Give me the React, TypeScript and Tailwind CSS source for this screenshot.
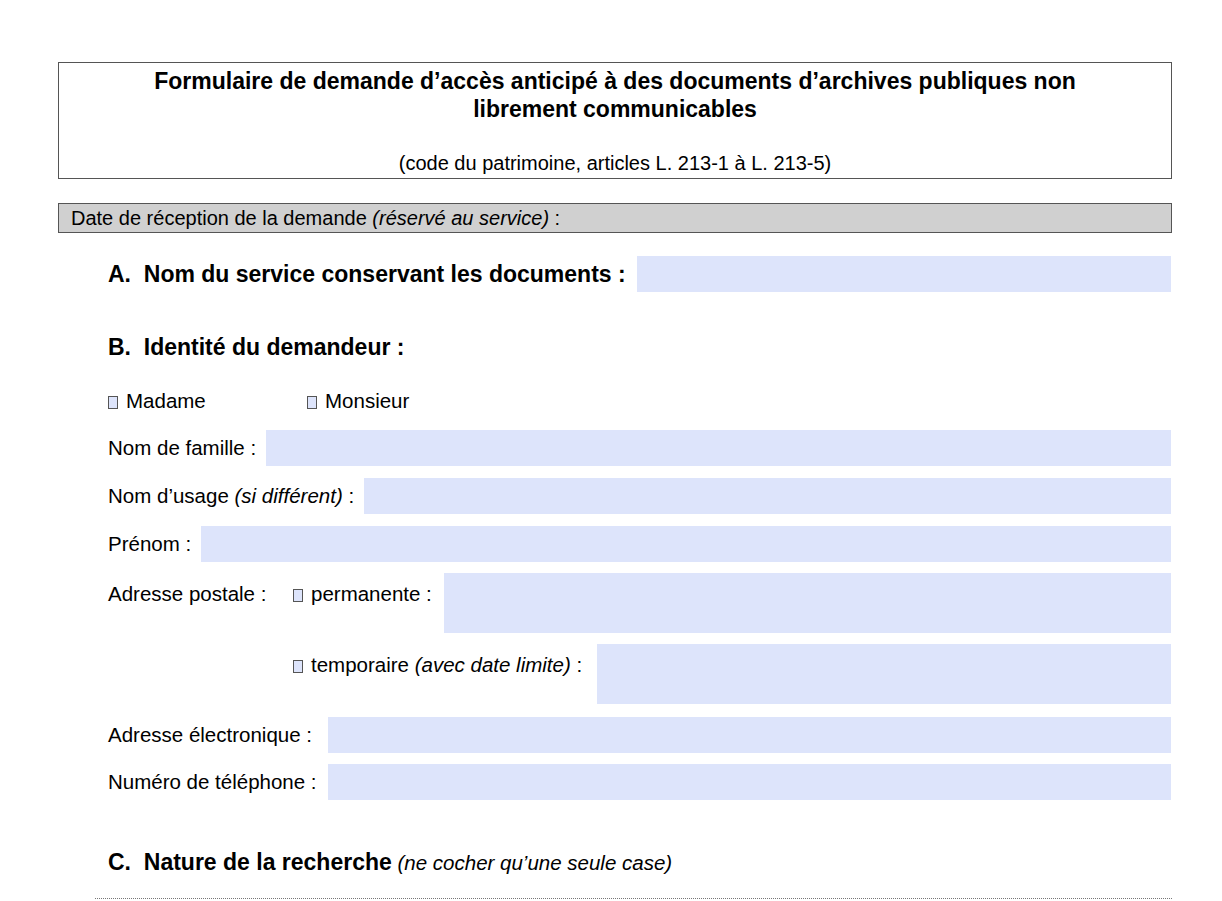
export default function App() {
  const F = "bg-[#dde4fb]";
  const Box = () => (
    <span className="inline-block w-[10px] h-[13px] border border-[#555] bg-[#dde4fb] mr-[8px] align-[-1px]" />
  );
  const Row = ({ label, mt = 12 }: { label: React.ReactNode; mt?: number }) => (
    <div className="flex items-center h-[36px]" style={{ marginTop: mt }}>
      <span className="whitespace-nowrap mr-[10px]">{label}</span>
      <div className={`flex-1 h-full ${F}`} />
    </div>
  );
  return (
    <div className="w-[1222px] h-[901px] bg-white text-black overflow-hidden relative" style={{ fontFamily: '"Liberation Sans", Arial, sans-serif' }}>
      <div className="ml-[58px] mt-[62px] w-[1114px] h-[117px] border border-[#555] flex flex-col items-center">
        <div className="font-bold text-[23px] leading-[28px] text-center mt-[4px] px-[50px]">
          Formulaire de demande d’accès anticipé à des documents d’archives publiques non librement communicables
        </div>
        <div className="text-[20px] mt-auto mb-[0px]">(code du patrimoine, articles L. 213-1 à L. 213-5)</div>
      </div>
      <div className="ml-[58px] mt-[24px] w-[1114px] h-[30px] border border-[#555] bg-[#d0d0d0] flex items-center pl-[12px] text-[20px]">
        Date de réception de la demande&nbsp;<i>(réservé au service)</i>&nbsp;:
      </div>
      <div className="ml-[108px] w-[1063px] text-[20.5px]">
        <div className="flex items-center h-[36px] mt-[23px]">
          <span className="font-bold text-[23px] mr-[11px] whitespace-nowrap">A.&nbsp;&nbsp;Nom du service conservant les documents :</span>
          <div className={`flex-1 h-full ${F}`} />
        </div>
        <div className="font-bold text-[23px] mt-[38px] h-[30px]">B.&nbsp;&nbsp;Identité du demandeur :</div>
        <div className="flex mt-[27px] h-[28px] items-center">
          <span className="w-[199px]"><Box />Madame</span>
          <span><Box />Monsieur</span>
        </div>
        <Row label="Nom de famille :" mt={15} />
        <Row label={<>Nom d’usage <i>(si différent)</i> :</>} />
        <Row label="Prénom :" />
        <div className="flex mt-[11px] h-[60px]">
          <span className="w-[185px] mt-[6px]">Adresse postale :</span>
          <span className="mt-[6px] mr-[12px] whitespace-nowrap"><Box />permanente :</span>
          <div className={`flex-1 ${F}`} />
        </div>
        <div className="flex mt-[11px] h-[60px]">
          <span className="ml-[185px] mt-[6px] mr-[15px] whitespace-nowrap"><Box />temporaire <i>(avec date limite)</i> :</span>
          <div className={`flex-1 ${F}`} />
        </div>
        <div className="flex items-center h-[36px] mt-[13px]">
          <span className="w-[220px] whitespace-nowrap">Adresse électronique :</span>
          <div className={`flex-1 h-full ${F}`} />
        </div>
        <div className="flex items-center h-[36px] mt-[11px]">
          <span className="w-[220px] whitespace-nowrap">Numéro de téléphone :</span>
          <div className={`flex-1 h-full ${F}`} />
        </div>
        <div className="mt-[45px] h-[30px] whitespace-nowrap">
          <span className="font-bold text-[23px]">C.&nbsp;&nbsp;Nature de la recherche</span> <i>(ne cocher qu’une seule case)</i>
        </div>
      </div>
      <div className="ml-[95px] mt-[23px] w-[1077px] border-t border-dotted border-[#777]" />
    </div>
  );
}
